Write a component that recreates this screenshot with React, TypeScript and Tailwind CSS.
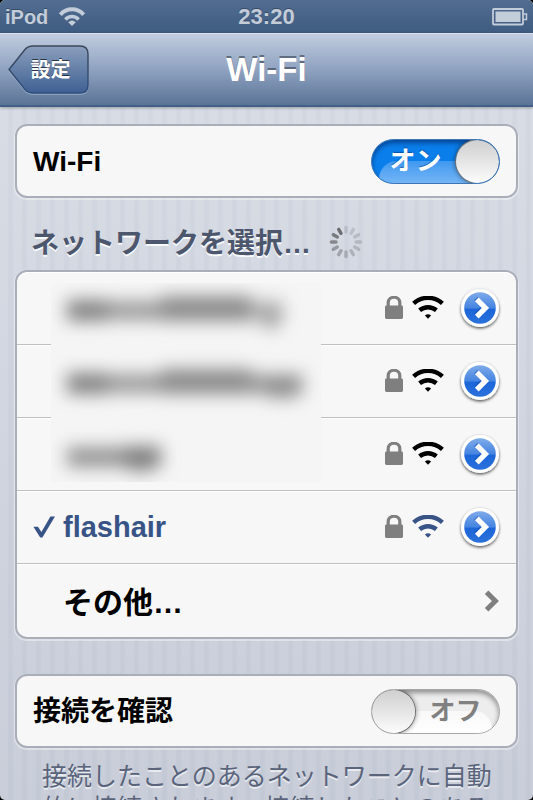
import React, { useState } from 'react';

interface Network {
  id: string;
  label: string;
  name?: string;
  connected?: boolean;
}

const networks: Network[] = [
  { id: 'a', label: 'ネットワーク 1' },
  { id: 'b', label: 'ネットワーク 2' },
  { id: 'c', label: 'ネットワーク 3' },
  { id: 'flashair', label: 'flashair', name: 'flashair', connected: true },
];

// clockwise from twelve o'clock
const spokes = [0.2, 0.22, 0.24, 0.26, 0.28, 0.32, 0.36, 0.44, 0.52, 0.66, 0.78, 0.88];

const StatusWifi = () => (
  <svg width="26" height="19" viewBox="0 0 26 19" fill="none" aria-hidden="true">
    <path d="M1.4 7.6A15.4 15.4 0 0 1 24.6 7.6" stroke="currentColor" strokeWidth="4" />
    <path d="M6.4 12.5A8.8 8.8 0 0 1 19.6 12.5" stroke="currentColor" strokeWidth="3.6" />
    <path d="M9.2 15.3Q13 11.6 16.8 15.3L13 19Z" fill="currentColor" />
  </svg>
);

const Battery = () => (
  <svg width="36" height="18" viewBox="0 0 36 18" fill="none" role="img" aria-label="バッテリー">
    <rect x="1" y="1" width="30" height="15.5" rx="1" stroke="currentColor" strokeWidth="1.8" />
    <rect x="3.5" y="3.5" width="25" height="10.5" fill="currentColor" />
    <path d="M31.5 6H34.5V11.5H31.5" stroke="currentColor" strokeWidth="1.5" />
  </svg>
);

const WifiIcon = () => (
  <svg width="32" height="24" viewBox="0 0 32 24" fill="none" aria-hidden="true">
    <path d="M1.6 7.4A21.4 21.4 0 0 1 30.4 7.4" stroke="currentColor" strokeWidth="4.4" />
    <path d="M7.6 14.3A13.2 13.2 0 0 1 24.4 14.3" stroke="currentColor" strokeWidth="4.4" />
    <path d="M12.9 19.4Q16 17.2 19.1 19.4L16 22.8Z" fill="currentColor" />
  </svg>
);

const LockIcon = () => (
  <svg width="18" height="24" viewBox="0 0 18 24" fill="none" aria-hidden="true">
    <path d="M3.2 12V6.6A5.8 5.4 0 0 1 14.8 6.6V12" stroke="#7f7f7f" strokeWidth="3.2" />
    <rect x="0" y="9.6" width="18" height="13.4" rx="1.4" fill="#7f7f7f" />
  </svg>
);

const CheckIcon = () => (
  <svg width="22" height="22" viewBox="0 0 22 22" aria-hidden="true">
    <path d="M0.4 10.8H5L8.4 16L17.4 0.6H22L9.4 21.4H7.2Z" fill="#385487" />
  </svg>
);

const Spinner = () => (
  <svg width="34" height="34" viewBox="-17 -17 34 34" role="img" aria-label="検索中">
    {spokes.map((opacity, i) => (
      <line
        key={i}
        y1="-10"
        y2="-14.6"
        stroke="#5f5f62"
        strokeOpacity={opacity}
        strokeWidth="3.4"
        strokeLinecap="round"
        transform={`rotate(${i * 30})`}
      />
    ))}
  </svg>
);

const DetailIcon = () => (
  <svg width="40" height="44" viewBox="0 0 40 44" aria-hidden="true" className="overflow-visible">
    <defs>
      <linearGradient id="disc" x1="0" y1="0" x2="0" y2="1">
        <stop offset="0" stopColor="#7fabea" />
        <stop offset="0.5" stopColor="#4584e0" />
        <stop offset="0.54" stopColor="#1d66d8" />
        <stop offset="1" stopColor="#2a71dc" />
      </linearGradient>
      <filter id="disc-shadow" x="-20%" y="-20%" width="140%" height="150%">
        <feDropShadow dx="0" dy="1.4" stdDeviation="1.5" floodColor="#000" floodOpacity="0.7" />
      </filter>
    </defs>
    <circle cx="20" cy="22" r="19" fill="#fff" filter="url(#disc-shadow)" />
    <circle cx="20" cy="22" r="15.8" fill="url(#disc)" />
    <path d="M16.8 13.6L25 21.8L16.8 30" fill="none" stroke="#1550b8" strokeOpacity="0.5" strokeWidth="5" transform="translate(-1 -1)" />
    <path d="M16.8 13.4L25.4 22L16.8 30.6" fill="none" stroke="#fff" strokeWidth="5.2" />
  </svg>
);

const Redaction = () => (
  <svg
    className="pointer-events-none absolute left-[34px] top-[11px] h-[199px] w-[270px]"
    viewBox="0 0 270 199"
    aria-hidden="true"
  >
    <defs>
      <filter id="smudge" x="-20%" y="-80%" width="140%" height="260%" colorInterpolationFilters="sRGB">
        <feGaussianBlur stdDeviation="8.5" />
      </filter>
    </defs>
    <rect width="270" height="199" fill="#f5f5f5" />
    <g filter="url(#smudge)" fill="#747474">
      <rect x="16" y="17" width="40" height="21" fillOpacity="0.9" />
      <rect x="56" y="18" width="54" height="19" fillOpacity="0.7" />
      <rect x="110" y="13" width="90" height="25" fillOpacity="0.82" />
      <rect x="200" y="18" width="32" height="20" fillOpacity="0.5" />
      <rect x="212" y="28" width="16" height="18" fillOpacity="0.5" />
      <rect x="16" y="90" width="40" height="21" fillOpacity="0.9" />
      <rect x="56" y="91" width="54" height="19" fillOpacity="0.7" />
      <rect x="110" y="86" width="90" height="25" fillOpacity="0.82" />
      <rect x="200" y="91" width="52" height="20" fillOpacity="0.7" />
      <rect x="216" y="98" width="30" height="18" fillOpacity="0.5" />
      <rect x="16" y="164" width="60" height="20" fillOpacity="0.75" />
      <rect x="74" y="163" width="36" height="22" fillOpacity="0.9" />
      <rect x="80" y="174" width="18" height="16" fillOpacity="0.5" />
    </g>
  </svg>
);

const Card = ({ children }: { children: React.ReactNode }) => (
  <section className="relative rounded-xl border-2 border-[#a9aeb9] bg-[#f7f7f7] shadow-[0_1px_0_1px_rgba(255,255,255,0.4)]">
    {children}
  </section>
);

interface SwitchRowProps {
  id: string;
  label: string;
  checked: boolean;
  onChange: (value: boolean) => void;
}

const SwitchRow: React.FC<SwitchRowProps> = ({ id, label, checked, onChange }) => (
  <div className="flex h-[70px] items-center justify-between pl-4 pr-4">
    <label htmlFor={id} className="pt-px text-[28px] font-bold leading-none text-black">
      {label}
    </label>
    <div
      className={`relative flex h-[45px] w-[129px] items-center overflow-hidden rounded-full border ${
        checked
          ? 'border-[#3f76b3] bg-[#0a7fec] shadow-[inset_0_3px_5px_rgba(0,30,90,0.6)]'
          : 'border-[#a8a8a8] bg-[#ededed] shadow-[inset_0_3px_5px_rgba(0,0,0,0.4)]'
      }`}
    >
      <span
        className={`absolute bottom-0 h-[22px] w-[118px] bg-linear-to-b ${
          checked
            ? 'left-[7px] rounded-tl-[18px] from-[#3e98f0] to-[#73b5f6]'
            : 'right-[7px] rounded-tr-[18px] from-[#f8f8f8] to-white'
        }`}
      />
      <span
        className={`relative w-[87px] text-center text-[26px] font-bold leading-none ${
          checked
            ? 'text-white [text-shadow:0_-1px_1px_rgba(0,40,110,0.5)]'
            : 'ml-auto text-[#808080]'
        }`}
      >
        {checked ? 'オン' : 'オフ'}
      </span>
      <span
        className={`absolute inset-y-0 w-[43px] rounded-full bg-linear-to-b from-[#cfcfcf] to-[#fcfcfc] shadow-[0_0_0_1px_#6f6f6f,0_0_5px_1px_rgba(0,0,0,0.45)] ${
          checked ? 'right-0' : 'left-0'
        }`}
      />
      <input
        id={id}
        type="checkbox"
        role="switch"
        checked={checked}
        onChange={(e) => onChange(e.target.checked)}
        className="absolute inset-0 cursor-pointer opacity-0"
      />
    </div>
  </div>
);

const NetworkRow = ({ network }: { network: Network }) => (
  <li
    className={`flex h-[73px] items-center border-b border-[#bfbfbf] pl-4 pr-4 shadow-[inset_0_1px_0_#fff] first:rounded-t-xl ${
      network.connected ? 'text-[#385487]' : 'text-black'
    }`}
  >
    <span className="flex w-[30px] shrink-0">{network.connected && <CheckIcon />}</span>
    <span className="flex-1 pt-px text-[29px] font-bold leading-none">{network.name}</span>
    <span className="flex items-center gap-[9px]">
      <LockIcon />
      <WifiIcon />
    </span>
    <button type="button" aria-label={`${network.label} の詳細`} className="ml-4 cursor-pointer">
      <DetailIcon />
    </button>
  </li>
);

export default function App() {
  const [wifi, setWifi] = useState(true);
  const [ask, setAsk] = useState(false);

  return (
    <div className="h-screen bg-black font-['Liberation_Sans','Noto_Sans_CJK_JP',sans-serif]">
      <div className="flex h-full flex-col overflow-hidden rounded-[5px] bg-linear-to-b from-[#d8dde6] to-[#c6cbd7]">
        <div className="grid h-[33px] shrink-0 grid-cols-3 items-center bg-linear-to-b from-[#526d90] to-[#3e5b81] px-[5px] text-[#c3ccd9] [text-shadow:0_-1px_0_rgba(0,0,0,0.3)]">
          <span className="flex items-center gap-[11px] text-xl font-bold leading-none">
            iPod
            <StatusWifi />
          </span>
          <span className="text-center text-[22px] font-bold leading-none">23:20</span>
          <span className="flex justify-end">
            <Battery />
          </span>
        </div>

        <header className="z-10 grid h-[74px] shrink-0 grid-cols-[1fr_auto_1fr] items-center border-b-2 border-t border-b-[#435f85] border-t-[#d9e0ea] bg-linear-to-b from-[#c1cddf] via-[#8fa2c0] to-[#5a7497] px-2 shadow-[0_1px_3px_rgba(0,0,0,0.3)]">
          <button
            type="button"
            className="relative h-[50px] w-[81px] cursor-pointer pl-1 text-xl font-bold leading-none text-white [text-shadow:0_-1px_0_rgba(0,0,0,0.6)]"
          >
            <svg className="absolute inset-0" width="81" height="50" viewBox="0 0 81 50" aria-hidden="true">
              <defs>
                <linearGradient id="back-fill" x1="0" y1="0" x2="0" y2="1">
                  <stop offset="0" stopColor="#8b9ebc" />
                  <stop offset="0.5" stopColor="#6480a8" />
                  <stop offset="1" stopColor="#3f6093" />
                </linearGradient>
                <linearGradient id="back-edge" x1="0" y1="0" x2="0" y2="1">
                  <stop offset="0" stopColor="#3c4859" />
                  <stop offset="1" stopColor="#2f4f7f" />
                </linearGradient>
              </defs>
              <path
                d="M1 25.5L17 5.5Q20 2 25 2H72Q80 2 80 10V41Q80 49 72 49H25Q20 49 17 45.5Z"
                fill="none"
                stroke="#c3d0e2"
                strokeOpacity="0.5"
                strokeWidth="1.5"
              />
              <path
                d="M1 24.5L17 4.5Q20 1 25 1H72Q80 1 80 9V40Q80 48 72 48H25Q20 48 17 44.5Z"
                fill="url(#back-fill)"
                stroke="url(#back-edge)"
                strokeWidth="1.5"
              />
            </svg>
            <span className="relative">設定</span>
          </button>
          <h1 className="text-[33px] font-bold leading-none text-white [text-shadow:0_-2px_0_rgba(60,70,85,0.65)]">
            Wi-Fi
          </h1>
        </header>

        <main className="flex-1 overflow-hidden bg-[repeating-linear-gradient(90deg,rgba(255,255,255,0.05)_0px,rgba(255,255,255,0.05)_7px,rgba(110,125,160,0.03)_9px,rgba(110,125,160,0.03)_12px,rgba(255,255,255,0.05)_14px)] px-[15px] pt-[17px]">
          <Card>
            <SwitchRow id="wifi" label="Wi-Fi" checked={wifi} onChange={setWifi} />
          </Card>

          <div className="flex h-[72px] items-center gap-[18px] pl-4 pt-4">
            <h2 className="pt-1 text-[28px] font-bold leading-none text-[#4c566c] [text-shadow:0_2px_0_rgba(255,255,255,0.85)]">
              ネットワークを選択…
            </h2>
            <Spinner />
          </div>

          <Card>
            <ul>
              {networks.map((network) => (
                <NetworkRow key={network.id} network={network} />
              ))}
              <li className="shadow-[inset_0_1px_0_#fff]">
                <button
                  type="button"
                  className="flex h-[73px] w-full cursor-pointer items-center justify-between pl-[46px] pr-4 text-[30px] font-bold leading-none text-black"
                >
                  <span className="pt-1">その他…</span>
                  <svg width="16" height="22" viewBox="0 0 16 22" fill="none" aria-hidden="true">
                    <path d="M2.6 2.2L11.4 11L2.6 19.8" stroke="#7f7f7f" strokeWidth="5" />
                  </svg>
                </button>
              </li>
            </ul>
            <Redaction />
          </Card>

          <div className="pt-[35px]">
            <Card>
              <SwitchRow id="ask" label="接続を確認" checked={ask} onChange={setAsk} />
            </Card>
            <p className="pl-[27px] pr-5 pt-3 text-[25px] leading-8 text-[#5a657c] [text-shadow:0_2px_0_rgba(255,255,255,0.6)]">
              接続したことのあるネットワークに自動的に接続されます。接続したことのある
            </p>
          </div>
        </main>
      </div>
    </div>
  );
}
